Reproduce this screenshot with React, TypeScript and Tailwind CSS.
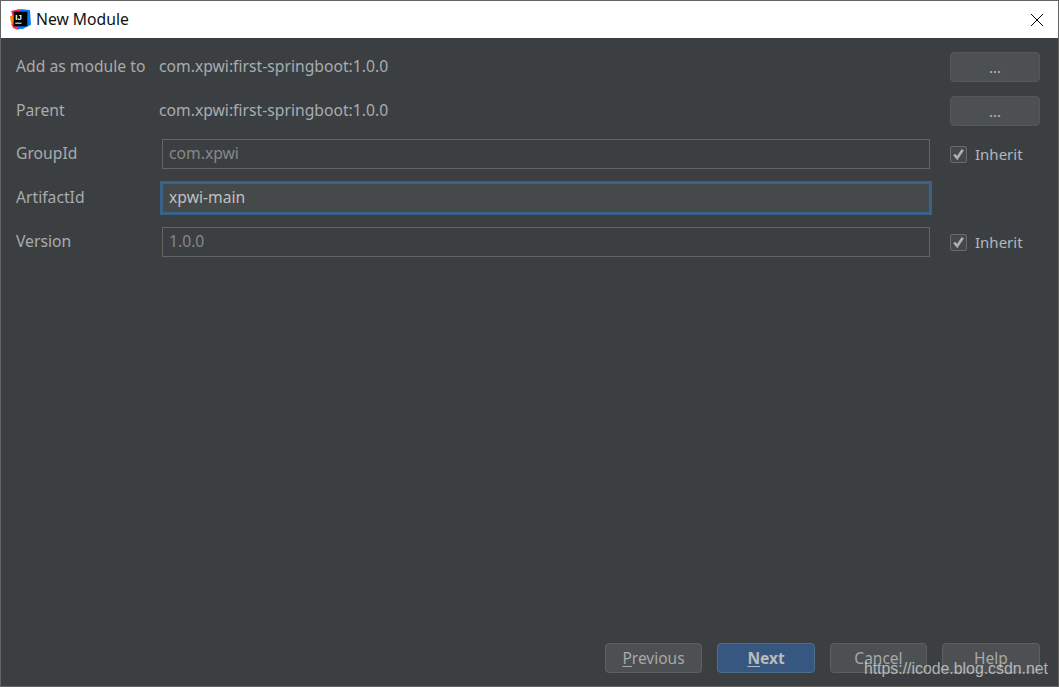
const font = "font-['Noto_Sans',sans-serif]"

function Logo() {
  return (
    <svg width="21" height="21" viewBox="0 0 20 20" className="shrink-0">
      <path d="M1 2 L9 0 L13 4 L4 12 Z" fill="#fe2857" />
      <path d="M10 0 L19 1 L20 15 L12 19 L5 19 Z" fill="#087cfa" />
      <path d="M0 7 L5 5 L6 15 L1 13 Z" fill="#fc801d" />
      <path d="M1 14 L7 12 L8 20 L3 18 Z" fill="#fe2857" />
      <rect x="3.5" y="2.5" width="13" height="14" fill="#000" />
      <text x="5" y="10" fontSize="7.5" fontWeight="700" fill="#fff" fontFamily="Liberation Sans, sans-serif">IJ</text>
      <rect x="5" y="13" width="6" height="1" fill="#fff" />
    </svg>
  )
}

function DotsButton() {
  return (
    <button className="flex h-[30px] w-[90px] items-end justify-center rounded-[4px] border border-[#55585a] bg-[#4c5052] pb-[6px] text-[15px] leading-none text-[#bbbbbb]">
      ...
    </button>
  )
}

function Inherit() {
  return (
    <label className="flex items-center gap-2 text-[15px] text-[#aeb8c0]">
      <span className="flex h-[17px] w-[17px] items-center justify-center rounded-[2px] border border-[#6b6b6b] bg-[#43494a]">
        <svg width="13" height="13" viewBox="0 0 13 13">
          <path d="M2.2 6.5 L5.2 10 L10.8 1.8" fill="none" stroke="#b0b0b0" strokeWidth="2.6" />
        </svg>
      </span>
      Inherit
    </label>
  )
}

function FooterButton({ children, primary, width }: { children: React.ReactNode; primary?: boolean; width: string }) {
  return (
    <button
      className={`h-[30px] rounded-[4px] border pt-[1px] text-[15.5px] ${width} ${
        primary
          ? 'border-[#4c708c] bg-[#365880] font-bold text-[#bbbbbb]'
          : 'border-[#5e6060] bg-[#4c5052] text-[#a8a8a8]'
      }`}
    >
      {children}
    </button>
  )
}

const labelClass = 'w-[146px] shrink-0 pb-[1px] text-[15.7px] text-[#a8abac]'
const valueClass = 'pb-[1px] text-[15.7px] text-[#a6adb1]'

export default function App() {
  return (
    <div className={`relative flex h-[687px] w-[1059px] flex-col overflow-hidden border border-[#646464] bg-[#3c3f41] ${font}`}>
      <div className="flex h-[37px] shrink-0 items-center bg-white pl-[9px] pr-[14px]">
        <Logo />
        <span className="ml-[5px] text-[15.7px] text-[#111111]">New Module</span>
        <svg width="14" height="14" viewBox="0 0 14 14" className="ml-auto">
          <path d="M1 1 L13 13 M13 1 L1 13" stroke="#000" strokeWidth="1" />
        </svg>
      </div>

      <div className="flex flex-1 flex-col pl-[15px] pr-[18px] pt-[14px]">
        <div className="flex h-[30px] items-center">
          <span className={labelClass}>Add as module to</span>
          <span className={`${valueClass} -ml-[3px]`}>com.xpwi:first-springboot:1.0.0</span>
          <div className="ml-auto"><DotsButton /></div>
        </div>
        <div className="mt-[14px] flex h-[30px] items-center">
          <span className={labelClass}>Parent</span>
          <span className={`${valueClass} -ml-[3px]`}>com.xpwi:first-springboot:1.0.0</span>
          <div className="ml-auto"><DotsButton /></div>
        </div>
        <div className="mt-[13px] flex h-[30px] items-center">
          <span className={labelClass}>GroupId</span>
          <div className="flex h-[30px] w-[768px] items-center border border-[#646464] bg-[#3c3f41] pb-[1px] pl-[6px] text-[15.7px] text-[#85888a]">com.xpwi</div>
          <div className="ml-[20px] pt-[1px]"><Inherit /></div>
        </div>
        <div className="mt-[14px] flex h-[30px] items-center">
          <span className={labelClass}>ArtifactId</span>
          <div className="-mx-[2px] flex h-[34px] w-[772px] items-center border-[3px] border-[#3a6288] bg-[#45494a] pb-[1px] pl-[6px] text-[15.7px] text-[#c0c0c0]">xpwi-main</div>
        </div>
        <div className="mt-[14px] flex h-[30px] items-center">
          <span className={labelClass}>Version</span>
          <div className="flex h-[30px] w-[768px] items-center border border-[#646464] bg-[#3c3f41] pb-[1px] pl-[6px] text-[15.7px] text-[#85888a]">1.0.0</div>
          <div className="ml-[20px]"><Inherit /></div>
        </div>

        <div className="mb-[13px] mt-auto flex justify-end gap-[15px]">
          <FooterButton width="w-[97px]"><span className="underline underline-offset-2">P</span>revious</FooterButton>
          <FooterButton width="w-[98px]" primary><span className="underline underline-offset-2">N</span>ext</FooterButton>
          <FooterButton width="w-[97px]">Cancel</FooterButton>
          <FooterButton width="w-[98px]">Help</FooterButton>
        </div>
      </div>

      <span className="absolute bottom-[9px] right-[10px] font-['Liberation_Sans',sans-serif] text-[15.85px] leading-none text-white/60">
        https://icode.blog.csdn.net
      </span>
    </div>
  )
}
